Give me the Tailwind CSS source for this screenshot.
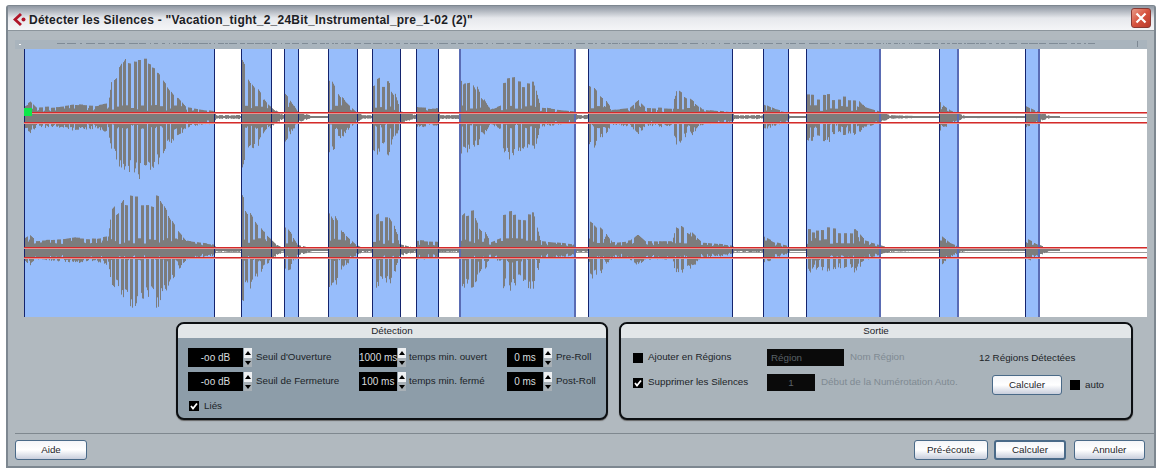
<!DOCTYPE html>
<html lang="fr">
<head>
<meta charset="UTF-8">
<title>Détecter les Silences</title>
<script src="https://cdn.jsdelivr.net/npm/@tailwindcss/browser@4"></script>
</head>
<body class="bg-white w-[1156px] h-[470px] overflow-hidden font-['Liberation_Sans',Arial,sans-serif] text-[9.8px] text-[#1c2428]">

<div class="ml-[6px] mt-[5px] w-[1150px] h-[463px] flex flex-col border-l-2 border-b-2 border-r-2 border-t border-[#7d8790] rounded-t-[3px] bg-[#b1b9bf]">

  <!-- title -->
  <div class="h-[25px] shrink-0 flex items-center pl-[4px] pr-[3px] bg-gradient-to-b from-[#8f97a2] via-[#e6e8ec] to-[#f4f5f7] border-b border-[#8c959c]">
    <svg class="w-[15px] h-[15px] mt-[3px]" viewBox="0 0 15 15"><path d="M8 1 L1 7.5 L8 14 L10 12 L5 7.5 L10 3 Z" fill="#b01428"/><circle cx="11.5" cy="7.5" r="2" fill="#b01428"/></svg>
    <span class="ml-[2px] mt-[3px] font-bold text-[12px] leading-none text-[#1b2024] tracking-[0.24px]">Détecter les Silences - "Vacation_tight_2_24Bit_Instrumental_pre_1-02 (2)"</span>
    <div class="ml-auto w-[20px] h-[20px] rounded-[3px] border border-[#8a3a34] bg-gradient-to-br from-[#e89a88] via-[#d6523e] to-[#b83a2c] flex items-center justify-center">
      <svg class="w-[12px] h-[12px]" viewBox="0 0 12 12"><path d="M1.5 1.5 L10.5 10.5 M10.5 1.5 L1.5 10.5" stroke="#fff" stroke-width="2.2"/></svg>
    </div>
  </div>

  <!-- ruler -->
  <div class="mt-[9px] ml-[7px] w-[1132px] h-[9px] shrink-0 bg-[#a9b4bd]">
    <svg id="ruler" class="block w-full h-full" viewBox="0 0 1132 9"></svg>
  </div>

  <!-- waveform -->
  <div class="ml-[16px] w-[1123px] h-[268px] shrink-0 bg-white">
    <svg id="wave" class="block" width="1123" height="268" viewBox="24 49 1123 268"></svg>
  </div>

  <!-- panels -->
  <div class="mt-[5px] ml-[168px] flex gap-[11px] shrink-0">
    <div class="w-[432px] h-[98px] rounded-[8px] border-2 border-[#0c0f12] bg-[#8d9da9] overflow-hidden shadow-[0_1px_1px_#666]">
      <div class="h-[14px] bg-[#e2e6e8] text-center leading-[14px]">Détection</div>
      <div class="pt-[10px] pl-[10px]">
        <div class="flex items-center h-[19px]">
          <div class="w-[55px] h-[19px] bg-black text-[#d8dcdf] text-[10px] text-center leading-[19px]">-oo dB</div>
          <div class="ml-px w-[8px] h-[19px] flex flex-col"><div class="h-[10px] bg-[#eef0f2] flex items-center justify-center"><div class="w-0 h-0 border-x-[3px] border-x-transparent border-b-[4px] border-b-black"></div></div><div class="h-[9px] bg-[#a8b0b6] flex items-center justify-center"><div class="w-0 h-0 border-x-[3px] border-x-transparent border-t-[4px] border-t-black"></div></div></div>
          <span class="ml-[4px] w-[103px]">Seuil d'Ouverture</span>
          <div class="w-[38px] h-[19px] bg-black text-[#d8dcdf] text-[10px] text-center leading-[19px] whitespace-nowrap">1000 ms</div>
          <div class="ml-px w-[8px] h-[19px] flex flex-col"><div class="h-[10px] bg-[#eef0f2] flex items-center justify-center"><div class="w-0 h-0 border-x-[3px] border-x-transparent border-b-[4px] border-b-black"></div></div><div class="h-[9px] bg-[#a8b0b6] flex items-center justify-center"><div class="w-0 h-0 border-x-[3px] border-x-transparent border-t-[4px] border-t-black"></div></div></div>
          <span class="ml-[3px] w-[98px]">temps min. ouvert</span>
          <div class="w-[36px] h-[19px] bg-black text-[#d8dcdf] text-[10px] text-center leading-[19px]">0 ms</div>
          <div class="ml-px w-[8px] h-[19px] flex flex-col"><div class="h-[10px] bg-[#eef0f2] flex items-center justify-center"><div class="w-0 h-0 border-x-[3px] border-x-transparent border-b-[4px] border-b-black"></div></div><div class="h-[9px] bg-[#a8b0b6] flex items-center justify-center"><div class="w-0 h-0 border-x-[3px] border-x-transparent border-t-[4px] border-t-black"></div></div></div>
          <span class="ml-[4px]">Pre-Roll</span>
        </div>
        <div class="flex items-center h-[19px] mt-[5px]">
          <div class="w-[55px] h-[19px] bg-black text-[#d8dcdf] text-[10px] text-center leading-[19px]">-oo dB</div>
          <div class="ml-px w-[8px] h-[19px] flex flex-col"><div class="h-[10px] bg-[#eef0f2] flex items-center justify-center"><div class="w-0 h-0 border-x-[3px] border-x-transparent border-b-[4px] border-b-black"></div></div><div class="h-[9px] bg-[#a8b0b6] flex items-center justify-center"><div class="w-0 h-0 border-x-[3px] border-x-transparent border-t-[4px] border-t-black"></div></div></div>
          <span class="ml-[4px] w-[103px]">Seuil de Fermeture</span>
          <div class="w-[38px] h-[19px] bg-black text-[#d8dcdf] text-[10px] text-center leading-[19px]">100 ms</div>
          <div class="ml-px w-[8px] h-[19px] flex flex-col"><div class="h-[10px] bg-[#eef0f2] flex items-center justify-center"><div class="w-0 h-0 border-x-[3px] border-x-transparent border-b-[4px] border-b-black"></div></div><div class="h-[9px] bg-[#a8b0b6] flex items-center justify-center"><div class="w-0 h-0 border-x-[3px] border-x-transparent border-t-[4px] border-t-black"></div></div></div>
          <span class="ml-[3px] w-[98px]">temps min. fermé</span>
          <div class="w-[36px] h-[19px] bg-black text-[#d8dcdf] text-[10px] text-center leading-[19px]">0 ms</div>
          <div class="ml-px w-[8px] h-[19px] flex flex-col"><div class="h-[10px] bg-[#eef0f2] flex items-center justify-center"><div class="w-0 h-0 border-x-[3px] border-x-transparent border-b-[4px] border-b-black"></div></div><div class="h-[9px] bg-[#a8b0b6] flex items-center justify-center"><div class="w-0 h-0 border-x-[3px] border-x-transparent border-t-[4px] border-t-black"></div></div></div>
          <span class="ml-[4px]">Post-Roll</span>
        </div>
        <div class="flex items-center mt-[8px] ml-px">
          <div class="w-[10px] h-[10px] bg-black flex items-center justify-center"><svg class="w-[8px] h-[8px]" viewBox="0 0 8 8"><path d="M1 4 L3 6.5 L7 1.5" stroke="#fff" stroke-width="1.8" fill="none"/></svg></div>
          <span class="ml-[5px]">Liés</span>
        </div>
      </div>
    </div>

    <div class="w-[514px] h-[98px] rounded-[8px] border-2 border-[#0c0f12] bg-[#a9b3ba] overflow-hidden shadow-[0_1px_1px_#666]">
      <div class="h-[14px] bg-[#e2e6e8] text-center leading-[14px]">Sortie</div>
      <div class="flex">
        <div class="pt-[11px] pl-[12px] w-[146px]">
          <div class="flex items-center h-[17px]">
            <div class="w-[10px] h-[10px] bg-black"></div>
            <span class="ml-[5px]">Ajouter en Régions</span>
          </div>
          <div class="flex items-center h-[17px] mt-[8px]">
            <div class="w-[10px] h-[10px] bg-black flex items-center justify-center"><svg class="w-[8px] h-[8px]" viewBox="0 0 8 8"><path d="M1 4 L3 6.5 L7 1.5" stroke="#fff" stroke-width="1.8" fill="none"/></svg></div>
            <span class="ml-[5px]">Supprimer les Silences</span>
          </div>
        </div>
        <div class="pt-[11px] w-[212px] text-[#7f8a92]">
          <div class="flex items-center h-[17px]">
            <div class="w-[77px] h-[17px] bg-[#0a0a0a] pl-[4px] leading-[17px] text-[#5a6268]">Région</div>
            <span class="ml-[6px]">Nom Région</span>
          </div>
          <div class="flex items-center h-[17px] mt-[8px]">
            <div class="w-[48px] h-[17px] bg-[#0a0a0a] text-center leading-[17px] text-[#5a6268]">1</div>
            <span class="ml-[6px] whitespace-nowrap">Début de la Numérotation Auto.</span>
          </div>
        </div>
        <div class="pt-[11px]">
          <div class="h-[18px] leading-[18px] whitespace-nowrap">12 Régions Détectées</div>
          <div class="flex items-center mt-[8px] ml-[13px]">
            <button class="w-[70px] h-[20px] rounded-[3px] border border-[#4a6a88] bg-gradient-to-b from-[#f4f5f8] via-[#ffffff] to-[#c8cedc] text-[#1c2428]">Calculer</button>
            <div class="ml-[8px] w-[10px] h-[10px] bg-black"></div>
            <span class="ml-[5px]">auto</span>
          </div>
        </div>
      </div>
    </div>
  </div>

  <div class="mt-[13px] ml-[7px] h-px shrink-0 bg-[#7f888f]"></div>

  <!-- buttons -->
  <div class="mt-[6px] ml-[7px] mr-[9px] flex">
    <button class="w-[72px] h-[20px] rounded-[3px] border border-[#4a6a88] bg-gradient-to-b from-[#f4f5f8] via-[#ffffff] to-[#c8cedc] text-[#1c2428]">Aide</button>
    <button class="ml-auto w-[74px] h-[20px] rounded-[3px] border border-[#4a6a88] bg-gradient-to-b from-[#f4f5f8] via-[#ffffff] to-[#c8cedc] text-[#1c2428]">Pré-écoute</button>
    <button class="ml-[6px] w-[72px] h-[20px] rounded-[3px] border-2 border-[#4a6a88] bg-gradient-to-b from-[#f4f5f8] via-[#ffffff] to-[#c8cedc] text-[#1c2428]">Calculer</button>
    <button class="ml-[8px] w-[71px] h-[20px] rounded-[3px] border border-[#4a6a88] bg-gradient-to-b from-[#f4f5f8] via-[#ffffff] to-[#c8cedc] text-[#1c2428]">Annuler</button>
  </div>
</div>

<script>
// blue regions [x1,x2]
var regions = [[24,214],[241,271],[284,298],[328,357],[372,400],[416,438],[459,574],[588,732],[763,788],[806,879],[939,957],[1025,1038]];
// edges drawn paler and thicker in the reference
var pale = [459,574,879,957,1038];
// envelope points [x, amp]
var env = [[24,12],[30,16],[36,10],[60,11],[75,13],[95,12],[108,14],[111,42],[118,50],[125,62],[135,60],[148,60],[158,56],[165,44],[172,30],[178,20],[186,10],[214,6],[216,2],[240,2],[242,58],[246,50],[252,38],[258,28],[266,16],[275,7],[283,2],
[285,24],[290,18],[297,6],[312,1],[327,1],[329,48],[336,32],[345,16],[355,6],[362,2],[371,2],[373,36],[380,40],[388,40],[394,28],[400,6],[415,2],[417,10],[437,9],[440,2],[458,2],[460,36],[464,40],[473,42],[479,26],[485,18],[490,8],[500,12],[502,40],[515,42],[533,40],[540,10],[574,6],[577,2],[587,2],[589,36],[594,32],[600,24],[606,18],[612,8],[630,10],[638,17],[645,10],[672,9],[676,30],[684,24],[692,18],[702,8],[732,5],[735,2],[762,2],[764,14],[775,8],[787,5],[790,1],[805,1],[807,24],[855,22],[865,10],[878,6],[890,2],[915,1],[938,1],[940,15],[950,7],[957,4],[965,1],[1024,1],[1026,12],[1037,6],[1050,1],[1060,0]];
function amp(x){
  for(var i=1;i<env.length;i++){
    if(x<=env[i][0]){
      var a=env[i-1],b=env[i];
      return a[1]+(b[1]-a[1])*(x-a[0])/(b[0]-a[0]);
    }
  }
  return 0;
}
var seed=7;
function rnd(){ seed=(seed*16807)%2147483647; return seed/2147483647; }
function channel(cy,k){
  var d='', spike=1, last=-1, next=24, band=8;
  for(var x=24;x<1060;x++){
    var a=amp(x)*k;
    // a new stroke every few pixels, each with its own height
    if(x>=next){ spike=.72+.28*rnd(); band=6+6*rnd(); last=x; next=x+4+Math.floor(rnd()*3); }
    var on=x-last<2+(a>20?1:2), s;
    if(a>20){
      s=on ? spike : Math.min(band/a,.5);
    }else{
      s=on ? .5+.5*spike : .5+.25*rnd();
    }
    var up=Math.max(a*s,1), dn=Math.max(a*s*(.8+.3*rnd()),1);
    d+='M'+(x+.5)+' '+(cy-up).toFixed(1)+'V'+(cy+dn).toFixed(1);
  }
  return '<path d="'+d+'" stroke="#7c7c7c" stroke-width="1" fill="none"/>';
}
var s='';
regions.forEach(function(r){
  s+='<rect x="'+r[0]+'" y="49" width="'+(r[1]-r[0])+'" height="268" fill="#97bdfb"/>';
});
s+='<rect x="24" y="117" width="1123" height="1" fill="#9c9c9c"/><rect x="24" y="252" width="1123" height="1" fill="#9c9c9c"/>';
s+=channel(117,1)+channel(250,1);
function edge(x){
  var p=pale.indexOf(x)>=0;
  s+='<rect x="'+x+'" y="49" width="'+(p?2:1)+'" height="268" fill="'+(p?'#5a6cb4':'#14246e')+'"/>';
}
regions.forEach(function(r){ edge(r[0]); edge(r[1]); });
[112,122,247,257].forEach(function(y){
  s+='<rect x="24" y="'+y+'" width="1123" height="1" fill="#d42a2a"/><rect x="24" y="'+(y+1)+'" width="1123" height="1" fill="#e8908e"/>';
});
s+='<rect x="24" y="108" width="8" height="8" fill="#0de84a"/>';
document.getElementById('wave').innerHTML=s;

var r='<rect x="4" y="4" width="2" height="1" fill="#fff"/><rect x="1122" y="1" width="1" height="6" fill="#7c8792"/>';
for(var x=42;x<1075;){
  var w=1+Math.floor(rnd()*9);
  r+='<rect x="'+x+'" y="3" width="'+w+'" height="1" fill="#7f8b96"/>';
  x+=w+1+Math.floor(rnd()*4);
}
document.getElementById('ruler').innerHTML=r;
</script>
</body>
</html>
